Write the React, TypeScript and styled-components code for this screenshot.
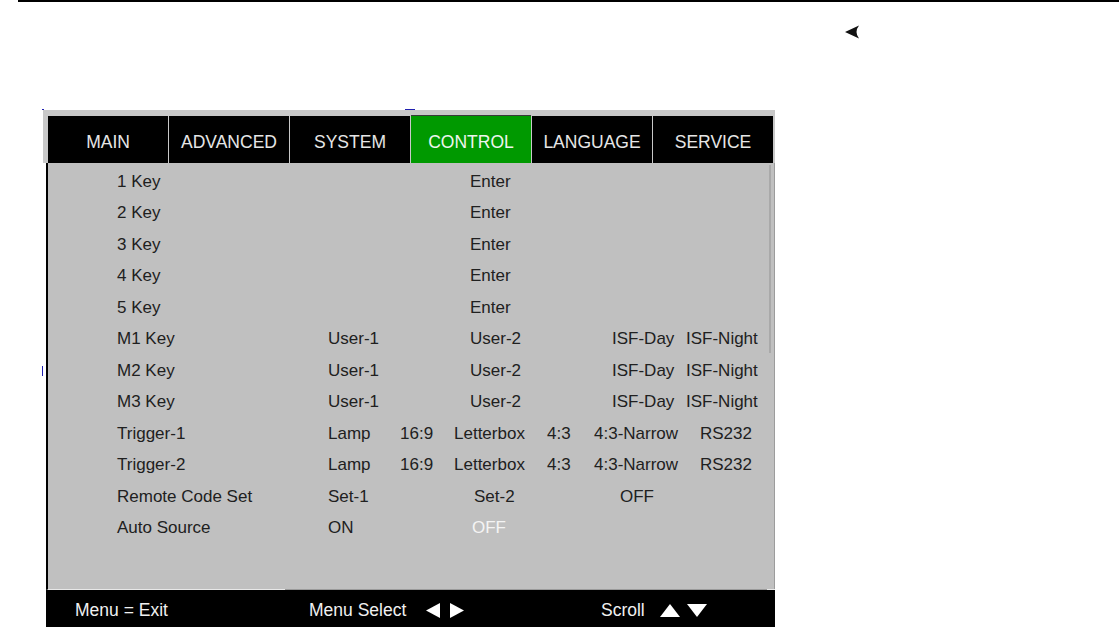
import React from 'react';
import styled, { createGlobalStyle } from 'styled-components';

const GlobalStyle = createGlobalStyle`
  html, body {
    margin: 0;
    padding: 0;
    background: #ffffff;
    font-family: "Liberation Sans", Arial, sans-serif;
  }
`;

const Page = styled.div`
  position: relative;
  width: 1119px;
  height: 627px;
  overflow: hidden;
  background: #ffffff;
`;

const TopRule = styled.div`
  margin-left: 18px;
  height: 2px;
  background: #000;
`;

const Pointer = styled.svg`
  position: absolute;
  left: 845px;
  top: 25px;
`;

const Mark = styled.div<{ $w: number; $h: number; $x: number; $y: number }>`
  position: absolute;
  left: ${p => p.$x}px;
  top: ${p => p.$y}px;
  width: ${p => p.$w}px;
  height: ${p => p.$h}px;
  background: #2020b0;
`;

const Frame = styled.div`
  margin: 108px 0 0 43px;
  width: 732px;
`;

const TabStrip = styled.div`
  background: #c8c8c8;
  padding: 6px 2px 0 5px;
`;

const Tabs = styled.div`
  display: flex;
  gap: 1px;
  background: #c8c8c8;
`;

const Tab = styled.div<{ $active?: boolean }>`
  width: 120px;
  height: 47px;
  box-sizing: border-box;
  padding-top: 5px;
  display: flex;
  align-items: center;
  justify-content: center;
  background: ${p => (p.$active ? '#009900' : '#000')};
  color: ${p => (p.$active ? '#eef5ee' : '#e6e6e6')};
  font-size: 17.5px;
  ${p => p.$active && 'border-top: 1px solid #3a3a3a; margin-top: -1px; height: 48px; padding-top: 6px;'}
`;

const Body = styled.div`
  position: relative;
  margin-left: 3px;
  height: 426px;
  box-sizing: border-box;
  padding-top: 3px;
  background: #c0c0c0;
  border-left: 2px solid #000;
  border-right: 1px solid #9c9c9c;
`;

const ScrollTrack = styled.div`
  position: absolute;
  right: 3px;
  top: 2px;
  width: 2px;
  height: 188px;
  background: #a9a9a9;
`;

const Row = styled.div<{ $cols: string }>`
  display: grid;
  grid-template-columns: ${p => p.$cols};
  align-items: center;
  height: 31.5px;
  padding-left: 69px;
  font-size: 17px;
  color: #202020;
  white-space: nowrap;
`;

const Value = styled.span<{ $light?: boolean }>`
  color: ${p => (p.$light ? '#f4f4f4' : '#202020')};
`;

const Footer = styled.div`
  position: relative;
  margin-left: 3px;
  height: 38px;
  box-sizing: border-box;
  padding: 3px 0 0 27px;
  background: #000;
  border-left: 2px solid #000;
  border-top: 1px solid #9a9a9a;
  display: grid;
  grid-template-columns: 234px 292px auto;
  align-items: center;
  color: #f0f0f0;
  font-size: 17.5px;

  &::before {
    content: '';
    position: absolute;
    left: 0;
    top: -1px;
    width: 237px;
    height: 1px;
    background: #e8e8e8;
  }

  &::after {
    content: '';
    position: absolute;
    right: 0;
    top: -1px;
    width: 8px;
    height: 1px;
    background: #e8e8e8;
  }
`;

const Hint = styled.div`
  display: flex;
  align-items: center;
`;

const Arrows = styled.span<{ $gap: number; $lead: number }>`
  display: inline-flex;
  align-items: center;
  gap: ${p => p.$gap}px;
  margin-left: ${p => p.$lead}px;
`;

const ENTER = '353px auto';
const MODE = '211px 142px 142px 74px auto';
const TRIGGER = '211px 72px 54px 93px 47px 106px auto';
const CODE = '211px 146px 146px auto';
const AUTO = '211px 144px auto';

type Cell = { text: string; light?: boolean };
type RowData = { label: string; cols: string; values: Cell[] };

const mode = ['User-1', 'User-2', 'ISF-Day', 'ISF-Night'].map(text => ({ text }));
const trigger = ['Lamp', '16:9', 'Letterbox', '4:3', '4:3-Narrow', 'RS232'].map(text => ({ text }));

const rows: RowData[] = [
  { label: '1 Key', cols: ENTER, values: [{ text: 'Enter' }] },
  { label: '2 Key', cols: ENTER, values: [{ text: 'Enter' }] },
  { label: '3 Key', cols: ENTER, values: [{ text: 'Enter' }] },
  { label: '4 Key', cols: ENTER, values: [{ text: 'Enter' }] },
  { label: '5 Key', cols: ENTER, values: [{ text: 'Enter' }] },
  { label: 'M1 Key', cols: MODE, values: mode },
  { label: 'M2 Key', cols: MODE, values: mode },
  { label: 'M3 Key', cols: MODE, values: mode },
  { label: 'Trigger-1', cols: TRIGGER, values: trigger },
  { label: 'Trigger-2', cols: TRIGGER, values: trigger },
  { label: 'Remote Code Set', cols: CODE, values: [{ text: 'Set-1' }, { text: 'Set-2' }, { text: 'OFF' }] },
  { label: 'Auto Source', cols: AUTO, values: [{ text: 'ON' }, { text: 'OFF', light: true }] },
];

const tabs = ['MAIN', 'ADVANCED', 'SYSTEM', 'CONTROL', 'LANGUAGE', 'SERVICE'];

const Tri: React.FC<{ dir: 'left' | 'right' | 'up' | 'down' }> = ({ dir }) => {
  if (dir === 'left') return <svg width="14" height="15" viewBox="0 0 14 15"><polygon points="14,0 14,15 0,7.5" fill="#fff" /></svg>;
  if (dir === 'right') return <svg width="14" height="15" viewBox="0 0 14 15"><polygon points="0,0 0,15 14,7.5" fill="#fff" /></svg>;
  if (dir === 'up') return <svg width="20" height="13" viewBox="0 0 20 13"><polygon points="0,13 20,13 10,0" fill="#fff" /></svg>;
  return <svg width="20" height="13" viewBox="0 0 20 13"><polygon points="0,0 20,0 10,13" fill="#fff" /></svg>;
};

const App: React.FC = () => (
  <Page>
    <GlobalStyle />
    <TopRule />
    <Pointer width="14" height="14" viewBox="0 0 14 14">
      <path d="M0 7 L14 0.5 Q9 7 14 13.5 Z" fill="#111" />
    </Pointer>
    <Mark $x={42} $y={109} $w={2} $h={1} />
    <Mark $x={405} $y={109} $w={10} $h={1} />
    <Mark $x={42} $y={366} $w={1} $h={10} />
    <Frame>
      <TabStrip>
        <Tabs>
          {tabs.map(t => (
            <Tab key={t} $active={t === 'CONTROL'}>{t}</Tab>
          ))}
        </Tabs>
      </TabStrip>
      <Body>
        <ScrollTrack />
        {rows.map(r => (
          <Row key={r.label} $cols={r.cols}>
            <span>{r.label}</span>
            {r.values.map((v, i) => (
              <Value key={i} $light={v.light}>{v.text}</Value>
            ))}
          </Row>
        ))}
      </Body>
      <Footer>
        <Hint>Menu = Exit</Hint>
        <Hint>
          Menu Select
          <Arrows $gap={10} $lead={20}>
            <Tri dir="left" />
            <Tri dir="right" />
          </Arrows>
        </Hint>
        <Hint>
          Scroll
          <Arrows $gap={7} $lead={15}>
            <Tri dir="up" />
            <Tri dir="down" />
          </Arrows>
        </Hint>
      </Footer>
    </Frame>
  </Page>
);

export default App;
